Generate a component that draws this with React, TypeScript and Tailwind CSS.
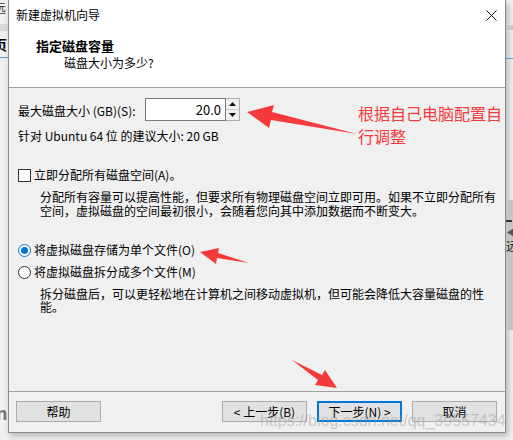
import React from "react";

const font = { fontFamily: '"Noto Sans CJK SC", "Microsoft YaHei", sans-serif' };

const Button = ({ label, primary }: { label: string; primary?: boolean }) => (
    <div
        className={`w-[85px] h-[21px] flex items-center justify-center bg-[#e1e1e1] text-[12px] text-black leading-none ${
            primary ? "border-2 border-[#0078d7]" : "border border-[#adadad]"
        }`}
    >
        {label}
    </div>
);

const Radio = ({ checked }: { checked?: boolean }) => (
    <div
        className={`w-[13px] h-[13px] rounded-full bg-white flex items-center justify-center shrink-0 border ${
            checked ? "border-[#0078d7]" : "border-[#333333]"
        }`}
    >
        {checked && <div className="w-[7px] h-[7px] rounded-full bg-[#0078d7]" />}
    </div>
);

const Arrows = () => (
    <svg className="absolute left-0 top-0 pointer-events-none" width="513" height="440">
        <polygon
            fill="#f43a3a"
            points="247,112 274,105 272,112 357,134 271,120 269,128"
        />
        <polygon
            fill="#f43a3a"
            points="200,252 219,248 218,253 249,263 217,258 216,264"
        />
        <polygon
            fill="#f43a3a"
            points="337,388 325,370 322,375 292,360 318,380 315,385"
        />
    </svg>
);

export default function App() {
    return (
        <div className="relative w-[513px] h-[440px] overflow-hidden bg-[#f0f0f0] flex" style={font}>
            {/* window behind, left edge */}
            <div className="w-[8px] h-full flex flex-col overflow-hidden">
                <div className="h-[24px] flex items-start">
                    <span className="text-[12px] leading-none -ml-[6px] mt-[2px] text-[#333]">远</span>
                </div>
                <div className="h-[7px] bg-[#d9d9d9]" />
                <div className="h-[26px] flex items-center">
                    <span className="text-[14px] font-bold leading-none -ml-[7px] text-black">页</span>
                </div>
                <div className="h-px bg-[#5a9bd5]" />
                <div className="h-[345px]" />
                <span className="text-[18px] font-bold leading-none text-[#777] -ml-[4px]">n</span>
            </div>

            {/* dialog */}
            <div className="w-[498px] h-[433px] flex flex-col border-x border-b border-[#8c8c8c] shadow-[2px_3px_6px_rgba(0,0,0,0.25)] bg-[#f0f0f0]">
                <div className="h-[30px] bg-white flex items-center justify-between pl-[7px] pr-[8px]">
                    <span className="text-[12px] text-black">新建虚拟机向导</span>
                    <svg width="11" height="11" viewBox="0 0 11 11">
                        <path d="M0.5 0.5 L10.5 10.5 M10.5 0.5 L0.5 10.5" stroke="#111" strokeWidth="1" />
                    </svg>
                </div>
                <div className="h-[58px] bg-white border-b border-[#a0a0a0] flex flex-col">
                    <div className="pl-[27px] mt-[7px] text-[13px] font-bold leading-[18px] text-black">指定磁盘容量</div>
                    <div className="pl-[55px] text-[12px] leading-[16px] text-black">磁盘大小为多少?</div>
                </div>

                <div className="h-[303px] flex flex-col pl-[9px] text-[12px] text-black">
                    <div className="mt-[10px] h-[23px] flex items-center">
                        <span className="w-[127px] mt-[2px] leading-[16px]">最大磁盘大小 (GB)(S):</span>
                        <div className="h-[23px] w-[81px] bg-white border border-[#7a7a7a] flex items-center justify-end pr-[4px] text-[13px]">
                            20.0
                        </div>
                        <div className="h-[23px] w-[14px] flex flex-col border border-l-0 border-[#adadad] bg-[#f0f0f0]">
                            <div className="h-[11px] flex items-center justify-center border-b border-[#cfcfcf]">
                                <svg width="7" height="4" viewBox="0 0 7 4">
                                    <polygon points="3.5,0 7,4 0,4" fill="#111" />
                                </svg>
                            </div>
                            <div className="h-[10px] flex items-center justify-center">
                                <svg width="7" height="4" viewBox="0 0 7 4">
                                    <polygon points="0,0 7,0 3.5,4" fill="#111" />
                                </svg>
                            </div>
                        </div>
                    </div>
                    <div className="mt-[7px] h-[16px] leading-[16px]">针对 Ubuntu 64 位 的建议大小: 20 GB</div>

                    <div className="mt-[23px] h-[16px] flex items-center gap-[3px]">
                        <div className="w-[13px] h-[13px] border border-[#333333] bg-white shrink-0" />
                        <span className="leading-[16px]">立即分配所有磁盘空间(A)。</span>
                    </div>
                    <div className="mt-[7px] pl-[22px] leading-[14px] whitespace-nowrap">
                        <div>分配所有容量可以提高性能，但要求所有物理磁盘空间立即可用。如果不立即分配所有</div>
                        <div>空间，虚拟磁盘的空间最初很小，会随着您向其中添加数据而不断变大。</div>
                    </div>

                    <div className="mt-[24px] h-[16px] flex items-center gap-[3px]">
                        <Radio checked />
                        <span className="leading-[16px]">将虚拟磁盘存储为单个文件(O)</span>
                    </div>
                    <div className="mt-[6px] h-[16px] flex items-center gap-[3px]">
                        <Radio />
                        <span className="leading-[16px]">将虚拟磁盘拆分成多个文件(M)</span>
                    </div>
                    <div className="mt-[7px] pl-[22px] leading-[13px] whitespace-nowrap">
                        <div>拆分磁盘后，可以更轻松地在计算机之间移动虚拟机，但可能会降低大容量磁盘的性</div>
                        <div>能。</div>
                    </div>
                </div>

                <div className="h-px bg-[#a0a0a0]" />
                <div className="flex items-start pt-[9px] pl-[7px] pr-[8px] h-[38px]">
                    <Button label="帮助" />
                    <div className="flex-1" />
                    <div className="flex gap-[10px]">
                        <Button label="< 上一步(B)" />
                        <Button label="下一步(N) >" primary />
                        <Button label="取消" />
                    </div>
                </div>
            </div>

            {/* window behind, right edge */}
            <div className="w-[7px] h-full flex flex-col overflow-hidden">
                <div className="h-[25px]" />
                <div className="h-[5px] bg-[#c8c8c8]" />
                <div className="h-[28px]" />
                <div className="h-px bg-[#5a9bd5]" />
                <div className="h-[141px]" />
                <div className="h-[130px] bg-[#c4c4c4] flex flex-col pt-[20px]">
                    <div className="h-[2px] w-[6px] bg-[#333]" />
                    <span className="mt-[4px] text-[12px] leading-none text-[#555]">◀</span>
                    <span className="mt-[2px] text-[12px] leading-none text-[#222]">远</span>
                </div>
            </div>

            {/* annotations */}
            <div className="absolute left-[358px] top-[102px] text-[16px] leading-[23px] text-[#f43a3a] whitespace-nowrap">
                <div>根据自己电脑配置自</div>
                <div>行调整</div>
            </div>
            <Arrows />
            <div
                className="absolute left-[260px] top-[411px] text-[16px] leading-[20px] text-[rgba(150,150,150,0.45)] whitespace-nowrap"
                style={{ fontFamily: '"Liberation Sans", sans-serif' }}
            >
                https://blog.csdn.net/qq_39557434
            </div>
        </div>
    );
}
